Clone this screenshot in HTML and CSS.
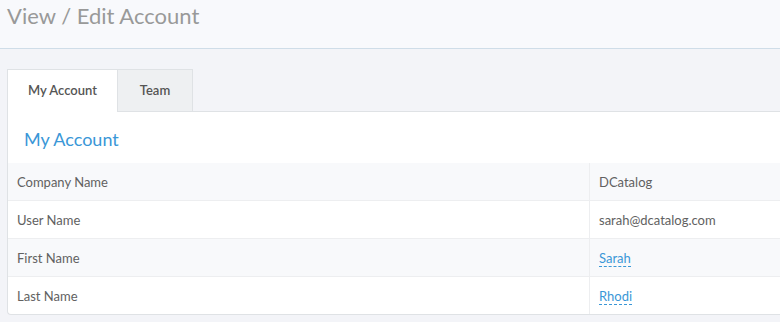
FILE: index.html
```html
<!DOCTYPE html>
<html lang="en">
<head>
    <meta charset="UTF-8">
    <title>View / Edit Account</title>
    <link rel="stylesheet" href="styles.css">
</head>
<body>
    <div class="page-header">
        <h1>View / Edit Account</h1>
    </div>

    <div class="page-body">
        <ul class="tabs">
            <li class="tab active">My Account</li>
            <li class="tab">Team</li>
        </ul>

        <div class="panel">
            <h2 class="panel-title">My Account</h2>
            <table class="info-table">
                <tr>
                    <td class="label">Company Name</td>
                    <td class="value">DCatalog</td>
                </tr>
                <tr>
                    <td class="label">User Name</td>
                    <td class="value">sarah@dcatalog.com</td>
                </tr>
                <tr>
                    <td class="label">First Name</td>
                    <td class="value"><a class="editable" href="#">Sarah</a></td>
                </tr>
                <tr>
                    <td class="label">Last Name</td>
                    <td class="value"><a class="editable" href="#">Rhodi</a></td>
                </tr>
            </table>
        </div>
    </div>
</body>
</html>
```

FILE: styles.css
```css
html, body {
    margin: 0;
    padding: 0;
    overflow: hidden;
}
body {
    background-color: #f3f4f8;
    color: #616161;
    font-family: "Source Sans Pro", Lato, "Noto Sans", sans-serif;
}
.page-header {
    height: 48px;
    background-color: #f8f9fc;
    border-bottom: 1px solid #cfdde8;
    padding: 0 7px;
}
.page-header h1 {
    margin: 0;
    padding-top: 2px;
    font-size: 22px;
    font-weight: normal;
    color: #999;
}
.page-body {
    padding: 20px 0 0 7px;
}
.tabs {
    display: flex;
    list-style: none;
    margin: 0;
    padding: 0;
}
.tab {
    box-sizing: border-box;
    width: 76px;
    height: 42px;
    line-height: 41px;
    text-align: center;
    white-space: nowrap;
    font-size: 13px;
    font-weight: 600;
    color: #555;
    background-color: #eef0f2;
    border: 1px solid #dfe2e5;
    border-bottom: none;
    margin-right: -1px;
}
.tab.active {
    width: 111px;
    background-color: #fff;
    margin-bottom: -1px;
    height: 43px;
    position: relative;
}
.panel {
    background-color: #fff;
    border: 1px solid #dfe2e5;
    border-right: none;
    border-radius: 0 0 0 4px;
}
.panel-title {
    margin: 0;
    padding: 16px 16px 13px;
    font-size: 18px;
    font-weight: normal;
    color: #3a97d7;
}
.info-table {
    width: 100%;
    border-collapse: collapse;
    font-size: 13px;
}
.info-table td {
    height: 37px;
    padding: 0 9px;
    border-bottom: 1px solid #edeef0;
}
.info-table tr:nth-child(odd) td {
    background-color: #f8f9fb;
}
.info-table tr:last-child td {
    border-bottom: none;
}
.info-table .label {
    width: 563px;
    border-right: 1px solid #edeef0;
}
.editable {
    color: #3a97d7;
    text-decoration: none;
    border-bottom: 1px dashed #3a97d7;
}
```
